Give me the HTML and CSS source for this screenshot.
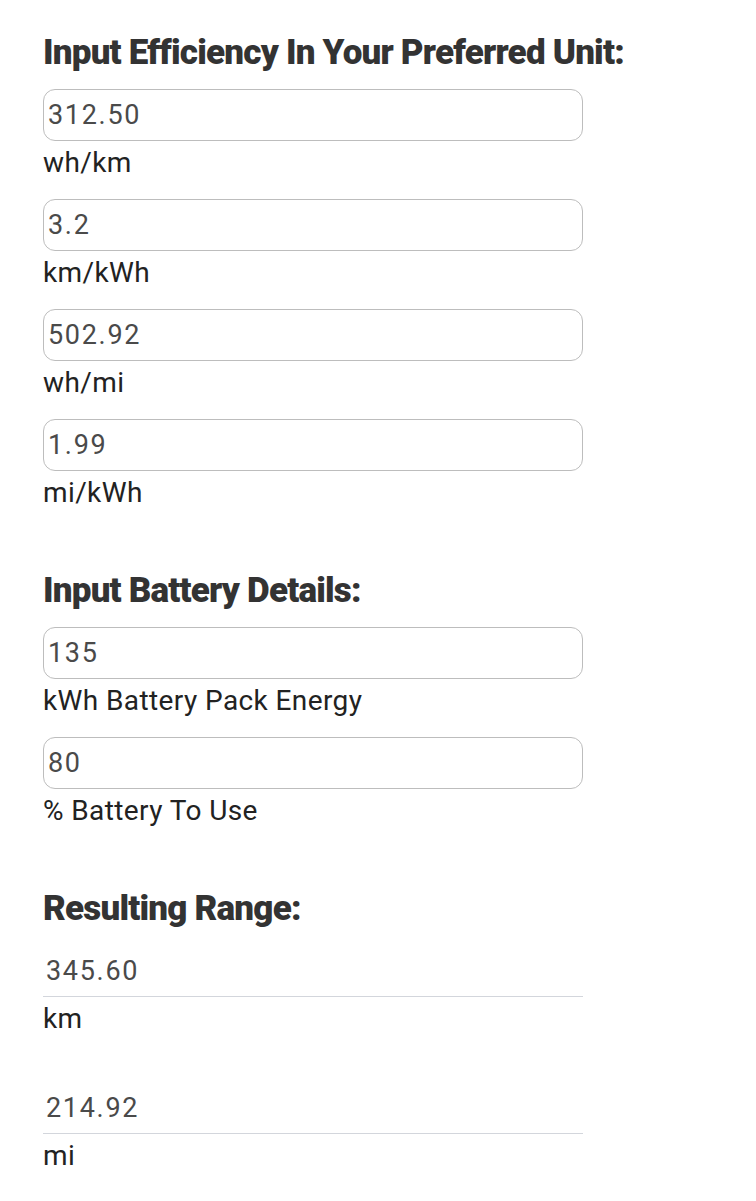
FILE: index.html
```html
<!DOCTYPE html>
<html>
<head>
<meta charset="utf-8">
<link rel="stylesheet" href="styles.css">
</head>
<body>
<div class="page">
  <section class="section">
    <h2 class="heading">Input Efficiency In Your Preferred Unit:</h2>
    <div class="field"><input class="box" type="text" value="312.50"><label class="unit">wh/km</label></div>
    <div class="field"><input class="box" type="text" value="3.2"><label class="unit">km/kWh</label></div>
    <div class="field"><input class="box" type="text" value="502.92"><label class="unit">wh/mi</label></div>
    <div class="field"><input class="box" type="text" value="1.99"><label class="unit">mi/kWh</label></div>
  </section>
  <section class="section">
    <h2 class="heading">Input Battery Details:</h2>
    <div class="field"><input class="box" type="text" value="135"><label class="unit">kWh Battery Pack Energy</label></div>
    <div class="field"><input class="box" type="text" value="80"><label class="unit">% Battery To Use</label></div>
  </section>
  <section class="section results">
    <h2 class="heading">Resulting Range:</h2>
    <div class="field result"><input class="box out" type="text" value="345.60" readonly><label class="unit">km</label></div>
    <div class="field result"><input class="box out" type="text" value="214.92" readonly><label class="unit">mi</label></div>
  </section>
</div>
</body>
</html>
```

FILE: styles.css
```css
html, body {
  margin: 0;
  padding: 0;
  background: #ffffff;
}

.page {
  padding: 32px 0 0 43px;
  font-family: Roboto, "Liberation Sans", sans-serif;
}

.section {
  display: flex;
  flex-direction: column;
  margin-bottom: 41px;
}

.section.results {
  margin-top: 1px;
}

.heading {
  margin: 0 0 15px 0;
  font-family: Roboto, "Liberation Sans", sans-serif;
  font-weight: 900;
  font-size: 35px;
  line-height: 42px;
  letter-spacing: -0.8px;
  color: #333333;
}

.field {
  display: flex;
  flex-direction: column;
  margin-bottom: 18px;
}

.field.result {
  margin-bottom: 45px;
}

.box {
  box-sizing: border-box;
  width: 540px;
  height: 52px;
  margin: 0;
  padding: 0 4px;
  border: 1px solid #bdbdbd;
  border-radius: 12px;
  background: #ffffff;
  font-family: Roboto, "Liberation Sans", sans-serif;
  font-size: 27px;
  letter-spacing: 1.7px;
  color: #4a4a4a;
  outline: none;
}

.box.out {
  border: none;
  border-bottom: 1px solid #d3d6dc;
  border-radius: 0;
  padding-left: 3px;
}

.unit {
  display: block;
  padding-top: 3px;
  font-size: 28px;
  line-height: 37px;
  letter-spacing: 0.4px;
  color: #222222;
}
```
